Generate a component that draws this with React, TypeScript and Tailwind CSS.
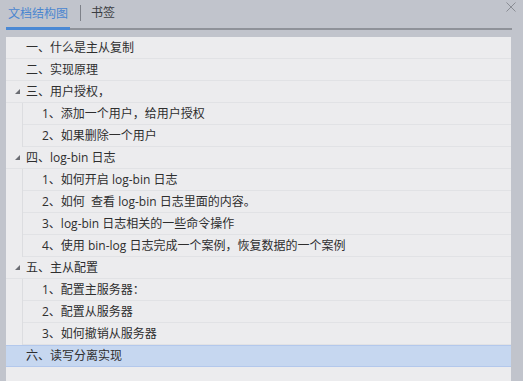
import React from "react";

type Item = {
	label: string;
	children?: string[];
	active?: boolean;
};

const outline: Item[] = [
	{ label: "一、什么是主从复制" },
	{ label: "二、实现原理" },
	{
		label: "三、用户授权，",
		children: ["1、添加一个用户，给用户授权", "2、如果删除一个用户"],
	},
	{
		label: "四、log-bin 日志",
		children: [
			"1、如何开启 log-bin 日志",
			"2、如何  查看 log-bin 日志里面的内容。",
			"3、log-bin 日志相关的一些命令操作",
			"4、使用 bin-log 日志完成一个案例，恢复数据的一个案例",
		],
	},
	{
		label: "五、主从配置",
		children: ["1、配置主服务器：", "2、配置从服务器", "3、如何撤销从服务器"],
	},
	{ label: "六、读写分离实现", active: true },
];

const font = { fontFamily: '"Open Sans", "Noto Sans CJK SC", sans-serif' };

function Caret() {
	return (
		<svg width="5" height="5" viewBox="0 0 5 5" className="shrink-0">
			<path d="M5 0 L5 5 L0 5 Z" fill="#6b6d73"/>
		</svg>
	);
}

function TopRow({ item }: { item: Item }) {
	return (
		<div
			className={
				item.active
					? "h-[22px] flex items-center bg-[#c6d7f0] border-y border-[#b3c8ec] -mb-px"
					: "h-[22px] flex items-center border-b border-[#e1e2e5]"
			}
		>
			<div className="w-[20px] flex justify-end pr-[6px]">
				{item.children && <Caret/>}
			</div>
			<span className="text-[12px] text-[#2e2e2e] leading-none whitespace-nowrap">{item.label}</span>
		</div>
	);
}

export default function App() {
	return (
		<div className="w-[523px] h-[381px] bg-[#c1c4cc] flex flex-col overflow-hidden" style={font}>
			<div className="h-[30px] flex pl-[6px] pr-[11px] relative">
				<div className="flex items-end border-b-2 border-[#8f9299] flex-1">
					<div className="w-[64px] h-full flex items-center justify-center border-b-[3px] border-[#4a88d4] -mb-[2px] pb-[1px]">
						<span className="text-[12px] text-[#4a86d0] whitespace-nowrap">文档结构图</span>
					</div>
					<div className="h-full flex items-center pb-[3px]">
						<span className="ml-[10px] w-px h-[16px] bg-[#7e8189]"/>
						<span className="ml-[10px] text-[12px] text-[#3b3d42] whitespace-nowrap">书签</span>
					</div>
				</div>
				<svg width="10" height="10" viewBox="0 0 10 10" className="absolute right-[7px] top-[2px]">
					<path d="M0.5 0.5 L9.5 9.5 M9.5 0.5 L0.5 9.5" stroke="#8a8d94" strokeWidth="1"/>
				</svg>
			</div>
			<div className="ml-[6px] w-[505px] flex-1 mt-[7px] bg-[#ececee]">
				{outline.map((item) => (
					<div key={item.label}>
						<TopRow item={item}/>
						{item.children && (
							<div className="ml-[16px] border-l border-[#dcdde0]">
								{item.children.map((c) => (
									<div key={c} className="h-[22px] flex items-center pl-[19px] border-b border-[#e1e2e5]">
										<span className="text-[12px] text-[#2e2e2e] leading-none whitespace-pre">{c}</span>
									</div>
								))}
							</div>
						)}
					</div>
				))}
			</div>
		</div>
	);
}
